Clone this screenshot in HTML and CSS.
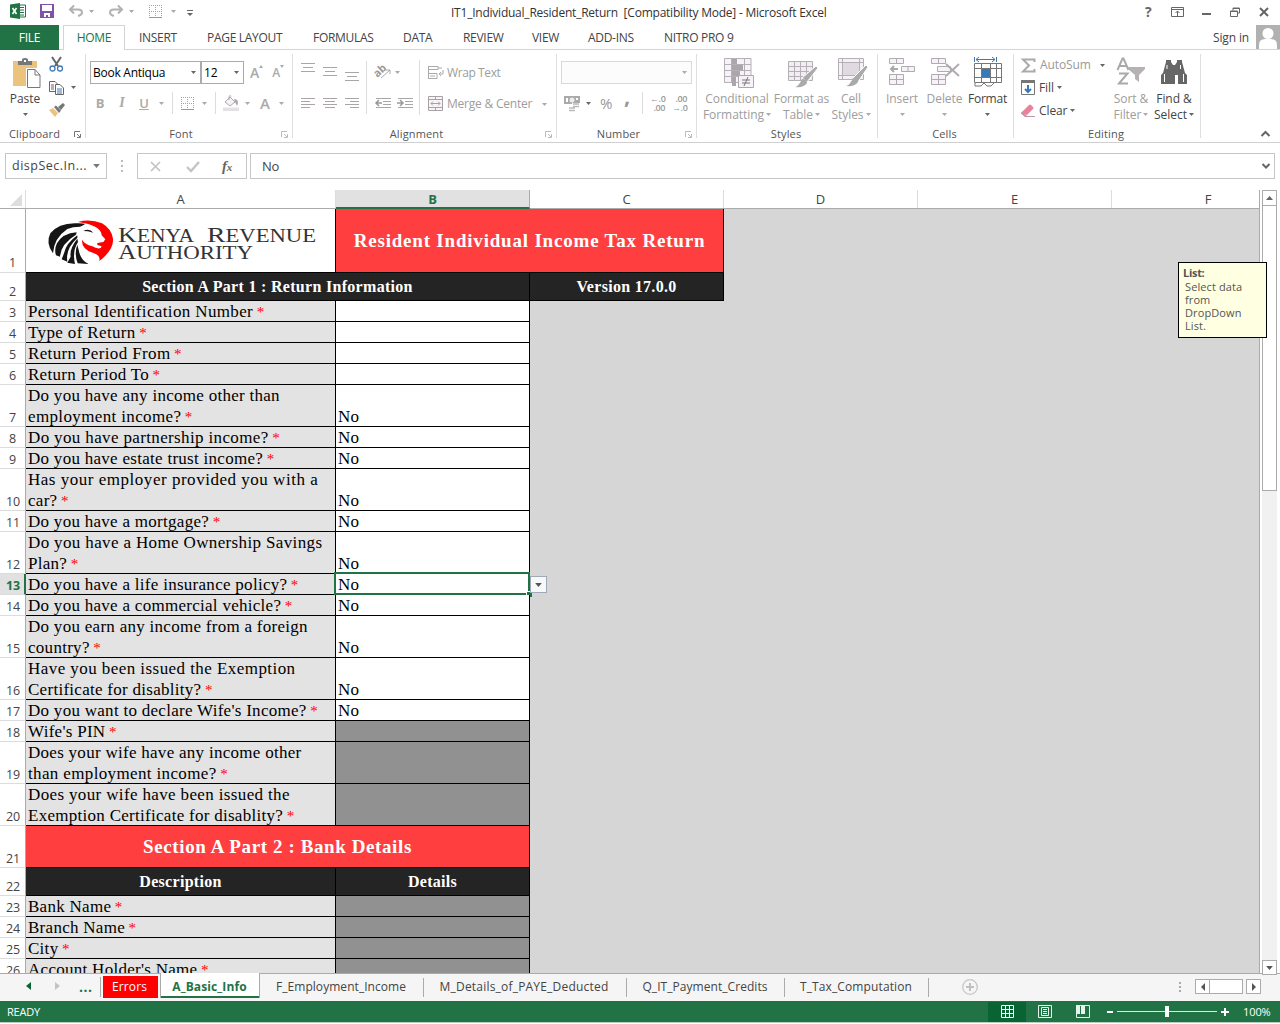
FILE: index.html
```html
<!DOCTYPE html>
<html lang="en">
<head>
<meta charset="utf-8">
<title>IT1_Individual_Resident_Return - Microsoft Excel</title>
<link rel="stylesheet" href="styles.css">
</head>
<body>
<svg class="defs" width="0" height="0">
  <symbol id="dn" viewBox="0 0 5 3"><path d="M0 0H5L2.5 3Z" fill="currentColor"/></symbol>
  <symbol id="launch" viewBox="0 0 7 7"><path d="M.5 6V.5H6M3 3l3 3M6.500 3v3.500H3" fill="none" stroke="currentColor"/></symbol>
  <symbol id="borders" viewBox="0 0 13 13"><path d="M0 .5H13M0 6.500H13M.5 0V13M6.500 0V13M12.500 0V13" fill="none" stroke="#a99fab" stroke-dasharray="1 1"/><path d="M0 12.500H13" stroke="#999"/></symbol>
</svg>
<header class="titlebar">
  <div class="quick">
    <svg class="q-xl" width="16" height="16" viewBox="0 0 16 16"><path d="M8 2h7.500v12H8" fill="#fff" stroke="#217346"/><path d="M10 4.500h4M10 7h4M10 9.500h4M10 12h4" stroke="#217346"/><path d="M0 1.500L10 0v16L0 14.500Z" fill="#217346"/><path d="M2.500 5l4 6M6.500 5l-4 6" stroke="#fff" stroke-width="1.600"/></svg>
    <svg class="q-save" width="14" height="14" viewBox="0 0 14 14"><path d="M0 0H14V14H0Z" fill="#8152a8"/><path d="M2 1h10v6H2zM4 9h6v4H8v-2H6v2H4z" fill="#fff"/></svg>
    <svg class="q-undo" width="14" height="12" viewBox="0 0 14 12"><path d="M1 4.500H9Q13 4.500 13 7.500Q13 10 9 11M5 .5L1 4.500L5 8.500" fill="none" stroke="#b1b1b1" stroke-width="2"/></svg>
    <svg class="q-a1" width="5" height="3"><use href="#dn"/></svg>
    <svg class="q-redo" width="14" height="12" viewBox="0 0 14 12"><path d="M13 4.500H5Q1 4.500 1 7.500Q1 10 5 11M9 .5L13 4.500L9 8.500" fill="none" stroke="#b1b1b1" stroke-width="2"/></svg>
    <svg class="q-a2" width="5" height="3"><use href="#dn"/></svg>
    <svg class="q-bd" width="13" height="13"><use href="#borders"/></svg>
    <svg class="q-a3" width="5" height="3"><use href="#dn"/></svg>
    <svg class="q-more" width="6" height="6" viewBox="0 0 6 6"><path d="M0 .5H6" stroke="#666"/><path d="M0 3H6L3 6Z" fill="#666"/></svg>
  </div>
  <div class="title">IT1_Individual_Resident_Return&nbsp; [Compatibility Mode] - Microsoft Excel</div>
  <div class="winctl">
    <b>?</b>
    <svg width="13" height="10" viewBox="0 0 13 10"><path d="M.5 .5h12v9H.5zM.5 2.500h12M6.500 9V4M4.500 6l2-2 2 2" fill="none" stroke="#666"/></svg>
    <svg width="9" height="10" viewBox="0 0 9 10"><path d="M0 7H9" stroke="#666" stroke-width="2"/></svg>
    <svg width="10" height="10" viewBox="0 0 10 10"><path d="M.5 4h7v5.500h-7zM.5 4.500h7M3 3.500V1h6.500v5H8M3 1.500h6.500" fill="none" stroke="#666"/></svg>
    <svg width="10" height="10" viewBox="0 0 10 10"><path d="M1 1l8 8M9 1L1 9" stroke="#666" stroke-width="2"/></svg>
  </div>
</header>
<nav class="tabs">
  <span class="tab file">FILE</span><span class="tab home">HOME</span><span class="tab t-ins">INSERT</span><span class="tab t-page">PAGE LAYOUT</span><span class="tab t-form">FORMULAS</span><span class="tab t-data">DATA</span><span class="tab t-rev">REVIEW</span><span class="tab t-view">VIEW</span><span class="tab t-add">ADD-INS</span><span class="tab t-nitro">NITRO PRO 9</span>
  <span class="signin">Sign in</span>
  <svg width="24" height="24" viewBox="0 0 24 24"><path d="M0 0H24V24H0Z" fill="#b1b1b1"/><circle cx="12" cy="8.500" r="5.500" fill="#fff"/><path d="M3 24V20Q3 14 9 14h6q6 0 6 6v4Z" fill="#fff"/></svg>
</nav>

<section class="ribbon">
  <div class="group g-clip">
    <div class="body">
      <div class="paste">
        <svg width="29" height="31" viewBox="0 0 29 31"><path d="M0 3H24V28H0Z" fill="#ecc37c"/><path d="M5 7V3h4V1q3-2 6 0v2h4v4Z" fill="#777"/><path d="M11 2h2v2h-2z" fill="#fff"/><path d="M13 10H27V30H13Z" fill="#fff"/><path d="M14.500 11.500H22L27 17V29.500H14.500ZM22 11.500V17H27" fill="#fff" stroke="#777"/></svg>
        <span>Paste</span>
        <svg class="dark" width="5" height="3"><use href="#dn"/></svg>
      </div>
      <div class="clips">
        <svg width="15" height="15" viewBox="0 0 15 15"><path d="M3 0l6 9M12 0L6 9" stroke="#666" stroke-width="2"/><circle cx="3.500" cy="11.500" r="2.500" fill="none" stroke="#4179b4" stroke-width="1.300"/><circle cx="11" cy="11.500" r="2.500" fill="none" stroke="#4179b4" stroke-width="1.300"/></svg>
        <div class="copyrow"><svg width="15" height="14" viewBox="0 0 15 14"><path d="M.5 .5H6l3 3V10.500H.5ZM2 4h3M2 6h3M2 8h3" fill="#fff" stroke="#666"/><path d="M6.500 3.500H11l3.500 3.500v6.500h-8Z" fill="#fff" stroke="#666"/><path d="M8 8h5M8 10h5M8 12h5" stroke="#4179b4"/></svg><svg class="dark" width="5" height="3"><use href="#dn"/></svg></div>
        <svg width="16" height="14" viewBox="0 0 16 14"><path d="M0 7l4-2 5 5-3 4Z" fill="#ecc37c"/><path d="M5 4l2-1.500 5 5L10 10ZM9 4l5-4 2 2-4 5Z" fill="#777"/></svg>
      </div>
    </div>
    <div class="label">Clipboard<svg width="7" height="7"><use href="#launch"/></svg></div>
  </div>

  <div class="group g-font">
    <div class="body col">
      <div class="fontrow1">
        <div class="combo c1">Book Antiqua<svg width="5" height="3"><use href="#dn"/></svg></div><div class="combo c2">12<svg width="5" height="3"><use href="#dn"/></svg></div>
        <span class="grow">A<svg width="4" height="3" viewBox="0 0 4 3"><path d="M0 3L2 0L4 3Z" fill="#aaa"/></svg></span>
        <span class="shrink">A<svg width="4" height="3" viewBox="0 0 4 3"><path d="M0 0H4L2 3Z" fill="#aaa"/></svg></span>
      </div>
      <div class="fontrow2">
        <b>B</b><i>I</i><u>U</u><svg width="5" height="3"><use href="#dn"/></svg><hr>
        <svg width="13" height="13"><use href="#borders"/></svg><svg width="5" height="3"><use href="#dn"/></svg><hr>
        <svg width="16" height="16" viewBox="0 0 16 16"><path d="M2 7l5-5 5 5-5 4ZM6 5V1.500q1.500-2 2 0" fill="#f6f2f6" stroke="#aaa"/><path d="M11 4q4 0 4 4l-1 3-2-4Z" fill="#aaa"/><path d="M0 12.500H16V16H0Z" fill="#e4e1e4"/></svg><svg width="5" height="3"><use href="#dn"/></svg>
        <strong>A</strong><svg width="5" height="3"><use href="#dn"/></svg>
      </div>
    </div>
    <div class="label">Font<svg class="pale" width="7" height="7"><use href="#launch"/></svg></div>
  </div>

  <div class="group g-align">
    <div class="body">
      <div class="aligns">
        <svg width="60" height="26" viewBox="0 0 60 26"><path d="M1 3.500h14M3 7.500h10M1 11.500h14M23 7.500h14M25 11.500h10M23 15.500h14M45 12.500h14M47 16.500h10M45 20.500h14" stroke="#a9a5a9"/></svg>
        <svg width="60" height="26" viewBox="0 0 60 26"><path d="M1 8.500h14M1 11.500h9M1 14.500h14M1 17.500h9M23 8.500h14M25 11.500h10M23 14.500h14M25 17.500h10M45 8.500h14M50 11.500h9M45 14.500h14M50 17.500h9" stroke="#a9a5a9"/></svg>
      </div>
      <div class="orient">
        <div><svg width="18" height="16" viewBox="0 0 18 16"><text x="-1" y="11" transform="rotate(-42 5 7)" font-size="11" font-weight="bold" fill="#999">ab</text><path d="M7 14L16 6M12 6h4v4" fill="none" stroke="#aaa"/></svg><svg width="5" height="3"><use href="#dn"/></svg></div>
        <svg class="indents" width="38" height="12" viewBox="0 0 38 12"><path d="M1 1.500h15M8 4.500h8M8 7.500h8M1 10.500h15M23 1.500h15M30 4.500h8M30 7.500h8M23 10.500h15" stroke="#a9a5a9"/><path d="M7 6H1M4 3L1 6l3 3M22 6h6M25 3l3 3-3 3" fill="none" stroke="#999" stroke-width="1.500"/></svg>
      </div>
      <div class="wraps">
        <div><svg width="16" height="16" viewBox="0 0 16 16"><path d="M.5 1v13M.5 1.500H10v3H.5M.5 8.500H9v5H.5M2 11h5M10 3h4M15 5v4h-4M13 7l-2 2 2 2" fill="none" stroke="#aaa"/></svg><span>Wrap Text</span></div>
        <div><svg width="16" height="16" viewBox="0 0 16 16"><path d="M.5 .5h14v14H.5ZM.5 3.500h14M.5 11.500h14M7.500 .5v3M7.500 11.500v3M3 7.500h9M5 5.500l-2 2 2 2M10 5.500l2 2-2 2" fill="#f8f4f8" stroke="#a5a1a5"/></svg><span>Merge &amp; Center</span><svg width="5" height="3"><use href="#dn"/></svg></div>
      </div>
    </div>
    <div class="label">Alignment<svg class="pale" width="7" height="7"><use href="#launch"/></svg></div>
  </div>

  <div class="group g-num">
    <div class="body col">
      <div class="numbox"><svg width="5" height="3"><use href="#dn"/></svg></div>
      <div class="numrow">
        <svg width="17" height="16" viewBox="0 0 17 16"><path d="M0 1H16V9H0Z" fill="#aaa"/><path d="M2 3h2v4H2zM12 3h2v2h-2z" fill="#fff"/><circle cx="8" cy="5" r="2.500" fill="#eee"/><path d="M8 8h8v8H4v-4h4z" fill="#fff"/><path d="M9 9h6M9 11.500h6M5 13h6M5 15.500h6" stroke="#bbb" stroke-width="1.500"/></svg>
        <svg class="dark" width="5" height="3"><use href="#dn"/></svg>
        <span class="pct">%</span><span class="comma">,</span><hr>
        <span class="dec">←.0<br>.00</span><span class="dec">.00<br>→.0</span>
      </div>
    </div>
    <div class="label">Number<svg class="pale" width="7" height="7"><use href="#launch"/></svg></div>
  </div>

  <div class="group g-styles">
    <div class="body">
      <div class="big w1"><svg width="30" height="31" viewBox="0 0 30 31"><path d="M.5 .5H27v24H.5ZM0 6.500h27M0 12.500h27M0 18.500h27M7.500 0v25M20.500 0v25" fill="#f7f2f8" stroke="#b5b0b5"/><path d="M8 1h5v5H8zM8 7h11v5H8zM8 13h8v5H8zM8 19h4v9H8z" fill="#aaa6aa"/><path d="M14.500 17.500h15v12h-15Z" fill="#f7f2f8" stroke="#aaa"/><path d="M18 22h8M18 25h8M24 19l-4 9" stroke="#777"/></svg><span>Conditional<br>Formatting <svg width="5" height="3"><use href="#dn"/></svg></span></div>
      <div class="big w2"><svg width="30" height="31" viewBox="0 0 30 31"><path d="M.5 3.500h24v19H.5ZM0 8.500h25M0 13.500h25M0 18.500h25M6.500 3v20M12.500 3v20M18.500 3v20" fill="#f1edf2" stroke="#b5b0b5"/><path d="M28 8l2 2-11 14-5-4Z" fill="#aaa" stroke="#fff"/><path d="M14 21q5 0 5 4-3 5-12 4 4-1 7-8Z" fill="#aaa"/></svg><span>Format as<br>Table <svg width="5" height="3"><use href="#dn"/></svg></span></div>
      <div class="big w3"><svg width="30" height="31" viewBox="0 0 30 31"><path d="M.5 .5h25v21H.5ZM0 4.500h26M0 17.500h26M4.500 0v22M21.500 0v22" fill="#f4f0f5" stroke="#b5b0b5"/><path d="M5 5h16v12H5z" fill="#dfdae0"/><path d="M28 7l2 2-10 15-5-4Z" fill="#aaa" stroke="#fff"/><path d="M15 20q5 0 5 4-3 5-12 4 4-1 7-8Z" fill="#aaa"/></svg><span>Cell<br>Styles <svg width="5" height="3"><use href="#dn"/></svg></span></div>
    </div>
    <div class="label">Styles</div>
  </div>

  <div class="group g-cells">
    <div class="body">
      <div class="big w4"><svg width="28" height="31" viewBox="0 0 28 31"><path d="M1.500 .5h14v5h-14zM8.500 .5v5M13.500 8.500h13v5h-13zM20 8.500v5M1.500 16.500h14v10h-14zM8.500 16.500v10M1.500 21.500h14" fill="#f7f2f8" stroke="#b0abb0"/><path d="M10 11H3M6 8l-3 3 3 3" fill="none" stroke="#aaa" stroke-width="2"/></svg><span>Insert</span><svg width="5" height="3"><use href="#dn"/></svg></div>
      <div class="big w5"><svg width="30" height="31" viewBox="0 0 30 31"><path d="M1.500 .5h14v5h-14zM8.500 .5v5M7.500 8.500h13v5h-13zM1.500 16.500h14v10h-14zM8.500 16.500v10M1.500 21.500h14" fill="#f7f2f8" stroke="#b0abb0"/><path d="M16 6l13 12M29 6L16 18" stroke="#b0abb0" stroke-width="2"/></svg><span>Delete</span><svg width="5" height="3"><use href="#dn"/></svg></div>
      <div class="big w6 on"><svg width="28" height="31" viewBox="0 0 28 31"><path d="M.5-1v5M22.500-1v5M2 1.500h19M5-1L2 1.500 5 4M18-1l3 2.500L18 4" fill="none" stroke="#3c78b4"/><path d="M.5 5.500h27v19H.5ZM0 10.500h28M0 19.500h28M7.500 5v20M16.500 5v20M22.500 5v20M1 25v3h6l3-3 3 3h4l3-3" fill="#fff" stroke="#777"/><path d="M8 11h8v8H8z" fill="#3c78b4"/></svg><span>Format</span><svg class="dark" width="5" height="3"><use href="#dn"/></svg></div>
    </div>
    <div class="label">Cells</div>
  </div>

  <div class="group g-edit">
    <div class="body">
      <div class="edits">
        <div class="off"><svg width="15" height="15" viewBox="0 0 15 15"><path d="M13.500 4V1.500H2L8 7.500L2 13.500H13.500V11" fill="none" stroke="#aaa" stroke-width="2"/></svg><span>AutoSum</span><svg class="dark far" width="5" height="3"><use href="#dn"/></svg></div>
        <div><svg width="14" height="15" viewBox="0 0 14 15"><path d="M.5 .5h13v14H.5Z" fill="#fff" stroke="#777"/><path d="M0 0h14v3H0z" fill="#777"/><path d="M7 5v7M4 9l3 3 3-3" fill="none" stroke="#3c78b4" stroke-width="2"/></svg><span>Fill</span><svg class="dark" width="5" height="3"><use href="#dn"/></svg></div>
        <div><svg width="14" height="13" viewBox="0 0 14 13"><path d="M1 8L8 1q1-1 2 0l2 2q1 1 0 2L6 11Z" fill="#e8819a"/><path d="M0 9l4 3.500h2L2 8ZM6 12.500h8" fill="#e8819a" stroke="#b9a" /></svg><span>Clear</span><svg class="dark" width="5" height="3"><use href="#dn"/></svg></div>
      </div>
      <div class="big w7"><svg width="30" height="31" viewBox="0 0 30 31"><path d="M1.500 12L6.500 .5h1L12.500 12M3.500 8h7M3 15.500h8.500L3 25.500h9" fill="none" stroke="#aaa" stroke-width="2"/><path d="M12 9H29v2l-6 6v7l-4-3v-4l-7-6Z" fill="#b5b1b5"/></svg><span>Sort &amp;<br>Filter <svg width="5" height="3"><use href="#dn"/></svg></span></div>
      <div class="big w8 on"><svg width="26" height="31" viewBox="0 0 26 31"><path d="M5 4V2h5v2l2 3h2l2-3V2h5v2l3 11 2 2v9h-9v-9h-3v9H0v-9l2-2Z" fill="#666"/><path d="M3.500 16v8M6 7v4M19.500 7v4M22.500 16v8" stroke="#fff"/></svg><span>Find &amp;<br>Select <svg class="dark" width="5" height="3"><use href="#dn"/></svg></span></div>
    </div>
    <div class="label">Editing</div>
  </div>
  <svg class="collapse" width="9" height="6" viewBox="0 0 9 6"><path d="M.5 5l4-4 4 4" fill="none" stroke="#666" stroke-width="2"/></svg>
</section>

<section class="formula">
  <div class="namebox">dispSec.In...<svg width="7" height="4"><use href="#dn"/></svg></div>
  <svg class="grip" width="2" height="12" viewBox="0 0 2 12"><path d="M0 0h2v2H0zM0 5h2v2H0zM0 10h2v2H0z" fill="#bbb"/></svg>
  <div class="fxbox">
    <svg width="11" height="11" viewBox="0 0 11 11"><path d="M1 1l9 9M10 1L1 10" stroke="#c3c3c3" stroke-width="1.700"/></svg>
    <svg width="14" height="11" viewBox="0 0 14 11"><path d="M1 6l4 4L13 1" fill="none" stroke="#c3c3c3" stroke-width="2.300"/></svg>
    <em>f<small>x</small></em>
  </div>
  <div class="input"><span>No</span><svg width="8" height="6" viewBox="0 0 8 6"><path d="M.5 1L4 4.500L7.500 1" fill="none" stroke="#666" stroke-width="2"/></svg></div>
</section>

<main class="work">
  <div class="sheet">
    <div class="cols"><span class="corner"><svg width="12" height="12" viewBox="0 0 12 12"><path d="M12 0V12H0Z" fill="#ddd"/></svg></span><span>A</span><span class="sel">B</span><span>C</span><span>D</span><span>E</span><span>F</span></div>
    <div class="row r1"><span class="n">1</span>
      <div class="logo"><svg width="270" height="46" viewBox="0 0 270 46">
        <g transform="translate(-8 -6) scale(.3333)">
          <path d="M114 24Q150 14 186 28Q214 44 219 74Q222 108 178 141Q182 124 160 117Q124 106 126 77Q134 91 157 97Q172 106 182 102L185 97L172 93V87L190 84L196 76L185 64Q184 34 114 24Z" fill="red"/>
          <path d="M116 28Q58 24 31 58Q16 88 39 118Q42 72 82 45Q98 38 120 38Q150 28 116 28Z" fill="#151515"/>
          <path d="M110 55Q68 58 51 88Q42 106 48 124L60 128Q62 90 108 62ZM112 64Q78 88 72 118L65 136L82 143Q76 104 112 72ZM112 74Q88 104 92 128L82 146L105 150Q96 112 114 84ZM112 92Q102 118 113 148L146 150Q122 140 116 108ZM130 51Q148 42 160 56L144 52Z" fill="#151515"/></g>
        <g fill="#333"><text x="70" y="22" font-size="22" textLength="76" lengthAdjust="spacingAndGlyphs">K<tspan font-size="18">ENYA</tspan></text><text x="159" y="22" font-size="22" textLength="109" lengthAdjust="spacingAndGlyphs">R<tspan font-size="18">EVENUE</tspan></text><text x="70" y="38.500" font-size="20" textLength="135" lengthAdjust="spacingAndGlyphs">A<tspan font-size="18">UTHORITY</tspan></text></g></svg></div>
      <div class="red span-bc"><span>Resident Individual Income Tax Return</span></div></div>
    <div class="row r2"><span class="n">2</span><div class="blk span-ab">Section A Part 1 : Return Information</div><div class="blk ver">Version 17.0.0</div></div>
    <div class="row"><span class="n">3</span><div class="q loose">Personal Identification Number <i>*</i></div><div class="v"></div></div>
    <div class="row"><span class="n">4</span><div class="q loose">Type of Return <i>*</i></div><div class="v"></div></div>
    <div class="row"><span class="n">5</span><div class="q loose">Return Period From <i>*</i></div><div class="v"></div></div>
    <div class="row"><span class="n">6</span><div class="q">Return Period To <i>*</i></div><div class="v"></div></div>
    <div class="row dbl"><span class="n">7</span><div class="q">Do you have any income other than<br><span class="loose">employment income?</span> <i>*</i></div><div class="v">No</div></div>
    <div class="row"><span class="n">8</span><div class="q loose">Do you have partnership income? <i>*</i></div><div class="v">No</div></div>
    <div class="row"><span class="n">9</span><div class="q">Do you have estate trust income? <i>*</i></div><div class="v">No</div></div>
    <div class="row dbl"><span class="n">10</span><div class="q"><span class="looser">Has your employer provided you with a</span><br>car? <i>*</i></div><div class="v">No</div></div>
    <div class="row"><span class="n">11</span><div class="q">Do you have a mortgage? <i>*</i></div><div class="v">No</div></div>
    <div class="row dbl"><span class="n">12</span><div class="q"><span class="loose">Do you have a Home Ownership Savings</span><br>Plan? <i>*</i></div><div class="v">No</div></div>
    <div class="row current"><span class="n">13</span><div class="q">Do you have a life insurance policy? <i>*</i></div><div class="v">No<span class="cursor"></span><span class="handle"></span><span class="drop"><svg width="7" height="4"><use href="#dn"/></svg></span></div></div>
    <div class="row"><span class="n">14</span><div class="q">Do you have a commercial vehicle? <i>*</i></div><div class="v">No</div></div>
    <div class="row dbl"><span class="n">15</span><div class="q">Do you earn any income from a foreign<br>country? <i>*</i></div><div class="v">No</div></div>
    <div class="row dbl"><span class="n">16</span><div class="q"><span class="wider">Have you been issued the Exemption</span><br>Certificate for disablity? <i>*</i></div><div class="v">No</div></div>
    <div class="row"><span class="n">17</span><div class="q">Do you want to declare Wife's Income? <i>*</i></div><div class="v">No</div></div>
    <div class="row"><span class="n">18</span><div class="q">Wife's PIN <i>*</i></div><div class="v dis"></div></div>
    <div class="row dbl"><span class="n">19</span><div class="q">Does your wife have any income other<br><span class="loose">than employment income?</span> <i>*</i></div><div class="v dis"></div></div>
    <div class="row dbl"><span class="n">20</span><div class="q"><span class="loose">Does your wife have been issued the</span><br>Exemption Certificate for disablity? <i>*</i></div><div class="v dis"></div></div>
    <div class="row dbl"><span class="n">21</span><div class="red part2 span-ab"><span>Section A Part 2 : Bank Details</span></div></div>
    <div class="row r2"><span class="n">22</span><div class="blk">Description</div><div class="blk">Details</div></div>
    <div class="row"><span class="n">23</span><div class="q">Bank Name <i>*</i></div><div class="v dis"></div></div>
    <div class="row"><span class="n">24</span><div class="q">Branch Name <i>*</i></div><div class="v dis"></div></div>
    <div class="row"><span class="n">25</span><div class="q">City <i>*</i></div><div class="v dis"></div></div>
    <div class="row"><span class="n">26</span><div class="q">Account Holder's Name <i>*</i></div><div class="v dis"></div></div>
  </div>
  <div class="vscroll">
    <span class="sbtn"><svg width="7" height="4" viewBox="0 0 7 4"><path d="M0 4L3.500 0L7 4Z" fill="#666"/></svg></span>
    <span class="thumb"></span>
    <span class="sbtn end"><svg width="7" height="4"><use href="#dn"/></svg></span>
  </div>
  <aside class="tip"><b>List:</b><p>Select data<br>from<br>DropDown<br>List.</p></aside>
</main>

<nav class="sheets">
  <div class="nav"><svg width="5" height="8" viewBox="0 0 5 8"><path d="M5 0V8L0 4Z" fill="#0a6332"/></svg><svg width="5" height="8" viewBox="0 0 5 8"><path d="M0 0V8L5 4Z" fill="#c3c3c3"/></svg><b>...</b></div>
  <span class="err">Errors</span><span class="act">A_Basic_Info</span><span class="st s1">F_Employment_Income</span><span class="st s2">M_Details_of_PAYE_Deducted</span><span class="st s3">Q_IT_Payment_Credits</span><span class="st s4">T_Tax_Computation</span>
  <svg class="plus" width="16" height="16" viewBox="0 0 16 16"><circle cx="8" cy="8" r="7.300" fill="none" stroke="#c6c6c6" stroke-width="1.300"/><path d="M8 4v8M4 8h8" stroke="#c0c0c0" stroke-width="2"/></svg>
  <svg class="grip2" width="2" height="10" viewBox="0 0 2 10"><path d="M0 0h2v2H0zM0 4h2v2H0zM0 8h2v2H0z" fill="#aaa"/></svg>
  <div class="hscroll"><span class="hb"><svg width="4" height="8" viewBox="0 0 4 8"><path d="M4 0V8L0 4Z" fill="#555"/></svg></span><span class="hthumb"></span><span class="hb last"><svg width="4" height="8" viewBox="0 0 4 8"><path d="M0 0V8L4 4Z" fill="#555"/></svg></span></div>
</nav>
<footer class="status">
  <span class="ready">READY</span>
  <span class="view"><svg width="13" height="13" viewBox="0 0 13 13"><path d="M.5 .5h12v12H.5ZM0 4.500h13M0 8.500h13M4.500 0v13M8.500 0v13" fill="none" stroke="#fff"/></svg></span>
  <svg class="v2" width="14" height="13" viewBox="0 0 14 13"><path d="M.5 .5h13v12H.5ZM3.500 2.500h7v8h-7zM5 4.500h4M5 6.500h4M5 8.500h4" fill="none" stroke="#e8f3ec"/></svg>
  <svg class="v3" width="14" height="13" viewBox="0 0 14 13"><path d="M.5 .5h13v12H.5Z" fill="none" stroke="#e8f3ec"/><path d="M0 0h4v9H0zM5 0h4v9H5z" fill="#e8f3ec"/></svg>
  <svg class="zoom" width="122" height="12" viewBox="0 0 122 12"><path d="M0 5h6v2H0zM114 5h8v2h-8zM117 2h2v8h-2z" fill="#fff"/><path d="M10 5.500h100" stroke="#dcebe2"/><path d="M58 0h4v11h-4z" fill="#fff"/></svg>
  <span class="pc">100%</span>
</footer>
</body>
</html>
```
FILE: styles.css
```css
* { box-sizing: border-box; }
body { margin: 0; width: 1280px; height: 1024px; overflow: hidden; background: #fff; color: #444; font: 12px/16px "Open Sans", "Noto Sans", sans-serif; display: flex; flex-direction: column; }
svg { display: block; flex: none; color: #aaa; overflow: visible; }
svg.dark { color: #666; }
svg.defs { position: absolute; }
b, strong { font-weight: 700; }
hr { width: 1px; height: 22px; margin: 0; border: 0; background: #dcdcdc; }

.titlebar { height: 25px; display: flex; flex: none; align-items: flex-start; }
.quick { width: 451px; display: flex; align-items: center; height: 22px; }
.q-xl { margin-left: 10px; } .q-save { margin-left: 14px; } .q-undo { margin-left: 15px; } .q-a1 { margin-left: 6px; }
.q-redo { margin-left: 15px; } .q-a2 { margin-left: 6px; } .q-bd { margin-left: 15px; } .q-a3 { margin-left: 9px; } .q-more { margin-left: 11px; margin-top: 3px; }
.title { width: 694px; padding-top: 5px; white-space: nowrap; letter-spacing: -.23px; color: #333; }
.winctl { display: flex; align-items: center; height: 23px; }
.winctl b { width: 9px; font-size: 14px; color: #666; }
.winctl svg { margin-left: 18px; } .winctl b + svg { margin-left: 17px; }
.winctl svg:nth-of-type(3), .winctl svg:nth-of-type(4) { margin-left: 19px; }

.tabs { height: 25px; flex: none; display: flex; border-bottom: 1px solid #d4d4d4; line-height: 25px; white-space: nowrap; letter-spacing: -.3px; }
.tab { flex: none; }
.file { width: 59px; background: #217346; color: #fff; text-align: center; height: 25px; }
.home { width: 62px; margin-left: 4px; height: 25px; border: 1px solid #d4d4d4; border-bottom: 0; background: #fff; color: #217346; text-align: center; line-height: 24px; }
.t-ins { width: 67px; padding-left: 14px; } .t-page { width: 106px; padding-left: 15px; }
.t-form { width: 90px; padding-left: 15px; } .t-data { width: 60px; padding-left: 15px; } .t-rev { width: 69px; padding-left: 15px; }
.t-view { width: 56px; padding-left: 15px; } .t-add { width: 76px; padding-left: 15px; } .t-nitro { width: 100px; padding-left: 15px; }
.signin { margin-left: auto; margin-right: 7px; letter-spacing: -.15px; }

.ribbon { height: 93px; flex: none; display: flex; padding-top: 4px; border-bottom: 1px solid #d0d0d0; letter-spacing: -.05px; }
.group { height: 88px; display: flex; flex-direction: column; background: linear-gradient(#dedede, #dedede) right top / 1px 84px no-repeat; }
.body { height: 73px; display: flex; }
.body.col { flex-direction: column; }
.label { height: 14px; line-height: 14px; font-size: 11px; text-align: center; color: #555; position: relative; letter-spacing: .15px; }
.label svg { position: absolute; right: 5px; top: 4px; color: #777; }
.label svg.pale { color: #bbb; }
.g-clip { width: 86px; } .g-font { width: 207px; } .g-align { width: 264px; } .g-num { width: 140px; } .g-styles { width: 181px; } .g-cells { width: 136px; } .g-edit { width: 187px; }
.g-clip .label, .g-font .label, .g-align .label, .g-num .label { padding-right: 17px; }
.g-styles .label, .g-cells .label, .g-edit .label { padding-right: 3px; }

.paste { width: 49px; padding: 4px 0 0 1px; display: flex; flex-direction: column; align-items: center; }
.paste svg:first-child { margin-left: 5px; }
.paste span { margin-top: 2px; } .paste .dark { margin-top: 6px; }
.clips { padding-top: 3px; display: flex; flex-direction: column; }
.copyrow { display: flex; align-items: center; gap: 7px; margin: 8px 0; height: 15px; }

.fontrow1 { display: flex; margin: 7px 0 0 4px; height: 23px; }
.combo { border: 1px solid #ababab; height: 23px; display: flex; justify-content: space-between; align-items: center; padding: 0 4px 0 2px; color: #000; }
.combo svg { color: #666; }
.c1 { width: 111px; letter-spacing: -.25px; } .c2 { width: 43px; }
.grow, .shrink { display: flex; color: #aaa; font-weight: 600; line-height: 24px; margin-left: 6px; font-size: 14px; }
.grow svg, .shrink svg { margin-top: 4px; margin-left: 0; }
.shrink { font-size: 12px; margin-left: 9px; }
.fontrow2 { display: grid; grid-template-columns: 22px 22px 22px 12px 10px 21px 12px 10px 22px 10px 26px 6px; height: 22px; margin: 8px 0 0 3px; align-items: center; justify-items: center; color: #aaa; font-size: 13px; }
.fontrow2 i { font-family: "Liberation Serif", serif; font-weight: bold; font-size: 14px; } .fontrow2 u { font-weight: 600; } .fontrow2 strong { font-size: 15px; font-weight: 600; }

.aligns { width: 74px; padding: 6px 0 0 7px; display: flex; flex-direction: column; gap: 4px; background: linear-gradient(#dcdcdc, #dcdcdc) right 7px / 1px 53px no-repeat; }
.orient { width: 53px; padding: 10px 0 0 7px; background: linear-gradient(#dcdcdc, #dcdcdc) right 6px / 1px 55px no-repeat; }
.orient div { display: flex; align-items: center; gap: 3px; height: 16px; margin-bottom: 17px; }
.indents { margin-left: 1px; }
.wraps { padding: 10px 0 0 8px; color: #9d9d9d; }
.wraps div { display: flex; align-items: center; height: 18px; margin-bottom: 13px; gap: 3px; letter-spacing: -.22px; }
.wraps div:first-child { letter-spacing: -.4px; }
.wraps div svg:last-child { margin-left: 7px; }

.numbox { width: 131px; height: 23px; margin: 7px 0 0 4px; border: 1px solid #d9d9d9; background: #fcfcfc; display: flex; justify-content: flex-end; align-items: center; padding-right: 4px; }
.numrow { display: flex; margin: 8px 0 0 7px; height: 22px; align-items: center; color: #999; }
.numrow .dark { margin-left: 5px; }
.pct { width: 14px; margin-left: 9px; font-size: 15px; } .comma { font-weight: bold; font-size: 22px; margin: -17px 13px 0 10px; width: 5px; }
.dec { font-size: 9px; line-height: 9px; margin-left: 7px; text-align: right; font-weight: 600; width: 15px; letter-spacing: -.4px; white-space: nowrap; }

.big { display: flex; flex-direction: column; align-items: center; padding-top: 4px; text-align: center; color: #9d9d9d; white-space: nowrap; }
.big.on { color: #444; }
.big span { margin-top: 2px; } .big span svg { display: inline-block; vertical-align: 3px; margin-left: -1px; }
.w1 > svg, .w2 > svg, .w3 > svg { margin-left: 3px; }
.big > svg:last-child { margin-top: 6px; }
.w1 { width: 72px; margin-left: 4px; } .w2 { width: 57px; } .w3 { width: 42px; } .w4 { width: 42px; margin-left: 3px; } .w5 { width: 43px; } .w6 { width: 43px; letter-spacing: -.2px; }
.edits { padding: 3px 0 0 7px; width: 95px; }
.edits div { height: 23px; display: flex; align-items: center; } .edits div:nth-child(1) { height: 16px; margin-bottom: 3px; }
.edits span { margin-left: 4px; letter-spacing: -.1px; } .edits .dark { margin-left: 3px; } .edits .far { margin-left: 9px; }
.off { color: #999; }
.w7, .w8 { width: 43px; padding-left: 1px; }
.collapse { margin: 77px 0 0 60px; }

.formula { height: 47px; flex: none; display: flex; padding: 10px 0 0 5px; font-size: 13px; letter-spacing: -.2px; }
.namebox, .fxbox, .input { height: 26px; border: 1px solid #c6c6c6; display: flex; align-items: center; }
.namebox { width: 102px; padding: 0 6px; justify-content: space-between; font-size: 12.500px; letter-spacing: .5px; } .namebox svg { color: #777; }
.grip { margin: 7px 14px 0; }
.fxbox { width: 110px; padding-left: 12px; gap: 25px; } .fxbox svg + svg { margin-right: -3px; }
.fxbox em { font: italic bold 15px "Liberation Serif", serif; color: #666; } .fxbox small { font-size: 11px; }
.input { width: 1025px; margin-left: 3px; padding: 0 4px 0 11px; justify-content: space-between; }

.work { height: 783px; flex: none; position: relative; display: flex; }
.sheet { width: 1260px; background: #d6d6d6; border-right: 1px solid #ababab; overflow: hidden; }
.cols { height: 19px; background: #fff; display: grid; grid-template-columns: 26px 310px 194px 194px 194px 194px 1fr; grid-template-rows: 100%; border-bottom: 1px solid #ababab; text-align: center; line-height: 19px; font-size: 13px; }
.cols span { border-right: 1px solid #dcdcdc; height: 18px; } .cols span:last-child { border-right: 0; padding-left: 45px; }
.cols .corner { display: flex; justify-content: flex-end; padding: 4px 3px 0 0; }
.cols .sel { background: #e1e1e1; color: #217346; font-weight: 700; height: 19px; border-bottom: 2px solid #217346; border-right-color: #ababab; }
.row { display: grid; grid-template-columns: 26px 310px 194px 194px; grid-template-rows: 100%; height: 21px; font: 17px/21px "Liberation Serif", serif; letter-spacing: .28px; color: #000; }
.dbl { height: 42px; } .r1 { height: 64px; } .r2 { height: 28px; }
.n { background: #fff; border-right: 1px solid #ababab; border-bottom: 1px solid #dcdcdc; font: 12.500px/17px "Open Sans", sans-serif; letter-spacing: -.1px; color: #444; display: flex; align-items: flex-end; justify-content: flex-end; padding-right: 5px; }
.row:nth-child(-n+10) .n { padding-right: 9px; }
.r1 .n { line-height: 19px; }
.q, .v { border-right: 1px solid #000; border-bottom: 1px solid #000; white-space: nowrap; }
.q { background: #e3e3e3; padding-left: 2px; }
.q i { color: red; font-style: normal; font-size: 15px; line-height: 15px; letter-spacing: 0; margin-left: -1px; }
.loose { letter-spacing: .36px; } .wider { letter-spacing: .44px; } .looser { letter-spacing: .52px; }
.v { background: #fff; display: flex; align-items: flex-end; padding-left: 2px; line-height: 18px; position: relative; }
.v.dis { background: #919191; }
.logo { background: #fff; border-right: 1px solid #000; border-bottom: 1px solid #000; padding: 11px 0 0 22px; letter-spacing: 0; }
.red { background: #ff3f3f; color: #fff; font-weight: bold; font-size: 19px; display: flex; align-items: center; justify-content: center; border-right: 1px solid #000; border-bottom: 1px solid #000; letter-spacing: .8px; }
.part2 { letter-spacing: .6px; }
.blk { background: #242424; color: #fff; font-weight: bold; font-size: 16px; line-height: 27px; text-align: center; border-right: 1px solid #000; border-bottom: 1px solid #000; letter-spacing: .3px; }
.span-bc { grid-column: 3 / 5; } .span-ab { grid-column: 2 / 4; }
.current .n { background: #e1e1e1; color: #217346; font-weight: 700; border-right: 2px solid #217346; padding-right: 4px; }
.cursor { position: absolute; inset: -2px -1px -1px -2px; border: 2px solid #217346; }
.handle { position: absolute; right: -3px; bottom: -3px; width: 6px; height: 6px; background: #217346; border: solid #fff; border-width: 1px 0 0 1px; }
.drop { position: absolute; left: 194px; top: 2px; width: 17px; height: 17px; border: 1px solid #a0a9b8; background: #f6f8fa; display: flex; align-items: center; justify-content: center; }
.drop svg, .sbtn svg { color: #555; }

.vscroll { width: 20px; padding: 0 3px 0 2px; display: flex; flex-direction: column; background: linear-gradient(#f1f1f1, #f1f1f1) 2px 0 / 15px 100% no-repeat; }
.vscroll span { width: 15px; }
.sbtn { height: 16px; border: 1px solid #ababab; background: #fff; display: flex; align-items: center; justify-content: center; }
.thumb { height: 286px; border: 1px solid #ababab; margin-top: -1px; background: #fff; }
.end { margin-top: auto; height: 15px; margin-bottom: -2px; position: relative; z-index: 1; }
.tip { position: absolute; left: 1178px; top: 72px; width: 89px; height: 76px; background: #ffffe1; border: 1px solid #000; padding: 3px 0 0 4px; font-size: 11px; line-height: 13px; color: #555; }
.tip p { margin: 1px 0 0 2px; letter-spacing: .1px; } .tip b { display: block; line-height: 13px; letter-spacing: -.3px; }

.sheets { height: 28px; flex: none; display: flex; background: #f5f5f5; border-top: 1px solid #ababab; line-height: 25px; white-space: nowrap; }
.nav { width: 101px; height: 24px; display: flex; align-items: center; padding-left: 26px; background: linear-gradient(#ababab, #ababab) right 3px / 1px 20px no-repeat; }
.nav svg + svg { margin-left: 24px; } .nav b { margin-left: 19px; font-size: 14px; letter-spacing: .5px; color: #217346; }
.err { width: 55px; height: 22px; margin: 2px 2px 0; background: red; color: #fff; text-align: center; line-height: 21px; padding-right: 2px; letter-spacing: .15px; }
.act { width: 100px; height: 25px; margin-top: -1px; background: #fff; border: solid #ababab; border-width: 0 1px; box-shadow: inset 0 -2px #217346; color: #217346; font-weight: 700; text-align: center; letter-spacing: .1px; line-height: 27px; padding-right: 1px; }
.st { background: linear-gradient(#ababab, #ababab) right 4px / 1px 19px no-repeat; text-align: center; letter-spacing: .05px; }
.s1 { width: 164px; padding-right: 2px; } .s2 { width: 203px; padding-right: 3px; letter-spacing: .2px; } .s3 { width: 158px; padding-right: 2px; } .s4 { width: 144px; padding-right: 2px; letter-spacing: .12px; }
.plus { margin: 5px 0 0 33px; }
.grip2 { margin: 8px 0 0 201px; }
.hscroll { margin: 5px 0 0 14px; display: flex; height: 15px; }
.hb, .hthumb { height: 15px; border: 1px solid #ababab; background: #fff; display: flex; align-items: center; justify-content: center; width: 15px; }
.hthumb { width: 34px; margin-left: -1px; } .last { margin-left: 3px; }
.status { height: 21px; flex: none; background: #217346; color: #fff; display: flex; align-items: center; font-size: 11px; box-shadow: 0 1px #b9cfc1; }
.ready { width: 988px; padding-left: 7px; letter-spacing: -.2px; }
.view { width: 38px; height: 20px; background: #0a6332; display: flex; align-items: center; justify-content: center; align-self: flex-end; padding-bottom: 1px; }
.v2 { margin-left: 12px; } .v3 { margin-left: 24px; } .zoom { margin-left: 17px; } .pc { margin-left: 14px; letter-spacing: -.1px; }
```
